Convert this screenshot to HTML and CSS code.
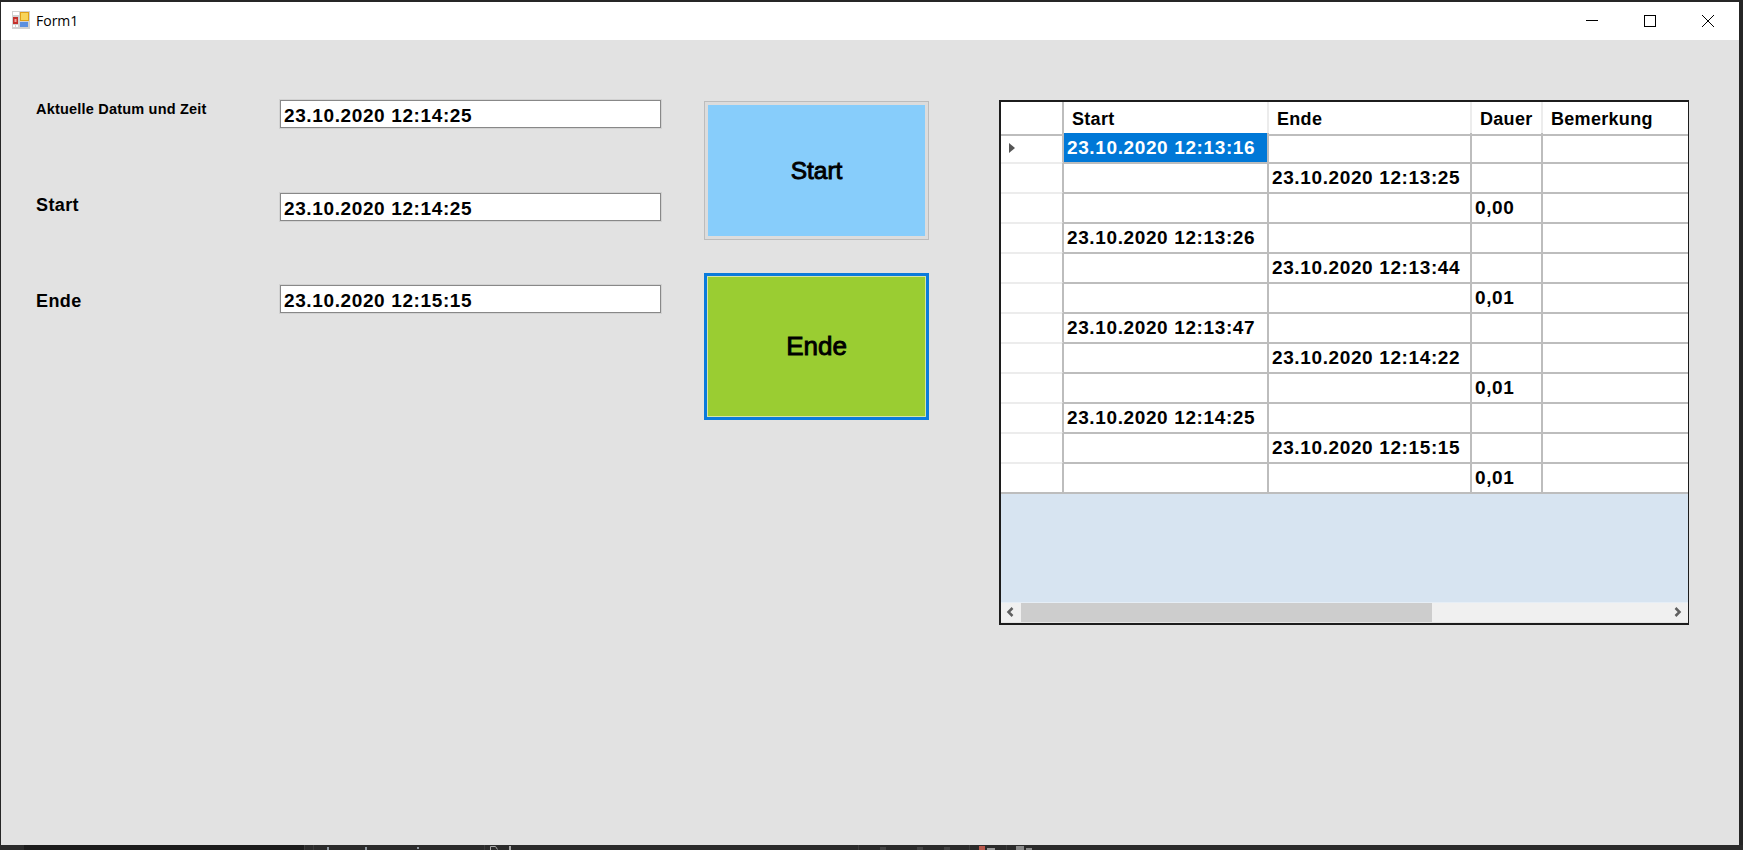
FILE: index.html
```html
<!DOCTYPE html>
<html lang="de">
<head>
<meta charset="utf-8">
<title>Form1</title>
<link rel="stylesheet" href="styles.css">
</head>
<body>
<div class="desk">
<div class="window">
  <header class="titlebar">
    <svg class="app-icon" width="18" height="18" viewBox="0 0 18 18">
      <rect width="18" height="18" fill="#d2d2d2"/>
      <rect x="1" y="1" width="6" height="3" fill="#fff"/>
      <rect x="1" y="6" width="5" height="7" fill="#c4302b"/>
      <rect x="2.5" y="8" width="2" height="3" fill="#f0a8a0"/>
      <rect x="8" y="1" width="9" height="9" fill="#e0a018"/>
      <rect x="9" y="2" width="7" height="7" fill="#f8d458"/>
      <rect x="8" y="11" width="8" height="5" fill="#5b8fe0"/>
      <rect x="1" y="14" width="2" height="2" fill="#fff"/>
      <rect x="4" y="14" width="2" height="2" fill="#fff"/>
    </svg>
    <span class="title">Form1</span>
    <div class="controls">
      <svg class="ctl" width="58" height="38" viewBox="0 0 58 38"><path d="M23 18.5h12" stroke="#000" fill="none"/></svg>
      <svg class="ctl" width="58" height="38" viewBox="0 0 58 38"><rect x="23.5" y="13.5" width="11" height="11" stroke="#000" fill="none"/></svg>
      <svg class="ctl" width="58" height="38" viewBox="0 0 58 38"><path d="M23 13l12 12M35 13L23 25" stroke="#000" fill="none"/></svg>
    </div>
  </header>
  <main class="client">
    <section class="fields">
      <div class="field">
        <label class="lbl lbl-small">Aktuelle Datum und Zeit</label>
        <div class="box">23.10.2020 12:14:25</div>
      </div>
      <div class="field">
        <label class="lbl lbl-start">Start</label>
        <div class="box">23.10.2020 12:14:25</div>
      </div>
      <div class="field">
        <label class="lbl lbl-end">Ende</label>
        <div class="box">23.10.2020 12:15:15</div>
      </div>
    </section>
    <section class="buttons">
      <button class="btn btn-start">Start</button>
      <button class="btn btn-end">Ende</button>
    </section>
    <section class="grid">
      <div class="rows">
        <div class="row head"><div class="c rh"></div><div class="c c1">Start</div><div class="c c2">Ende</div><div class="c c3">Dauer</div><div class="c c4">Bemerkung</div></div>
        <div class="row"><div class="c rh"><span class="arrow"></span></div><div class="c c1 sel">23.10.2020 12:13:16</div><div class="c c2"></div><div class="c c3"></div><div class="c c4"></div></div>
        <div class="row"><div class="c rh"></div><div class="c c1"></div><div class="c c2">23.10.2020 12:13:25</div><div class="c c3"></div><div class="c c4"></div></div>
        <div class="row"><div class="c rh"></div><div class="c c1"></div><div class="c c2"></div><div class="c c3">0,00</div><div class="c c4"></div></div>
        <div class="row"><div class="c rh"></div><div class="c c1">23.10.2020 12:13:26</div><div class="c c2"></div><div class="c c3"></div><div class="c c4"></div></div>
        <div class="row"><div class="c rh"></div><div class="c c1"></div><div class="c c2">23.10.2020 12:13:44</div><div class="c c3"></div><div class="c c4"></div></div>
        <div class="row"><div class="c rh"></div><div class="c c1"></div><div class="c c2"></div><div class="c c3">0,01</div><div class="c c4"></div></div>
        <div class="row"><div class="c rh"></div><div class="c c1">23.10.2020 12:13:47</div><div class="c c2"></div><div class="c c3"></div><div class="c c4"></div></div>
        <div class="row"><div class="c rh"></div><div class="c c1"></div><div class="c c2">23.10.2020 12:14:22</div><div class="c c3"></div><div class="c c4"></div></div>
        <div class="row"><div class="c rh"></div><div class="c c1"></div><div class="c c2"></div><div class="c c3">0,01</div><div class="c c4"></div></div>
        <div class="row"><div class="c rh"></div><div class="c c1">23.10.2020 12:14:25</div><div class="c c2"></div><div class="c c3"></div><div class="c c4"></div></div>
        <div class="row"><div class="c rh"></div><div class="c c1"></div><div class="c c2">23.10.2020 12:15:15</div><div class="c c3"></div><div class="c c4"></div></div>
        <div class="row"><div class="c rh"></div><div class="c c1"></div><div class="c c2"></div><div class="c c3">0,01</div><div class="c c4"></div></div>
      </div>
      <div class="scrollbar">
        <svg class="sb-btn" width="20" height="19" viewBox="0 0 20 19"><path d="M11.5 5L7.5 9l4 4" stroke="#606060" stroke-width="2.5" fill="none"/></svg>
        <div class="thumb"></div>
        <div class="track"></div>
        <svg class="sb-btn" width="20" height="19" viewBox="0 0 20 19"><path d="M7.5 5l4 4-4 4" stroke="#606060" stroke-width="2.5" fill="none"/></svg>
      </div>
    </section>
  </main>
</div>
</div>
<svg class="strip" width="1743" height="5" viewBox="0 0 1743 5">
  <rect width="1743" height="5" fill="#2b2b2b"/>
  <rect x="24" width="280" height="5" fill="#1c1c1c"/>
  <rect x="304" width="1" height="5" fill="#3c3c3c"/>
  <rect x="313" width="1" height="5" fill="#3c3c3c"/>
  <rect x="327" y="2" width="2" height="3" fill="#8f979e"/>
  <rect x="365" y="2" width="2" height="3" fill="#8f979e"/>
  <rect x="417" y="2" width="2" height="2" fill="#8f979e"/>
  <rect x="484" width="1" height="5" fill="#3c3c3c"/>
  <path d="M490.5 5V1.5h5l2 3" stroke="#a8a8a8" fill="none"/>
  <rect x="509" y="1" width="2" height="4" fill="#a8a8a8"/>
  <rect x="858" width="1" height="5" fill="#3c3c3c"/>
  <rect x="880" y="2" width="6" height="3" fill="#444"/>
  <rect x="917" y="2" width="6" height="3" fill="#444"/>
  <rect x="944" y="2" width="6" height="3" fill="#444"/>
  <rect x="969" width="1" height="5" fill="#3c3c3c"/>
  <rect x="979" y="1" width="6" height="4" fill="#b8584c"/>
  <rect x="987" y="3" width="8" height="2" fill="#999"/>
  <rect x="1006" width="1" height="5" fill="#3c3c3c"/>
  <rect x="1016" y="1" width="8" height="4" fill="#8a8a8a"/>
  <rect x="1026" y="3" width="6" height="2" fill="#8a8a8a"/>
</svg>
</body>
</html>
```
FILE: styles.css
```css
* { box-sizing: border-box; }
html, body { margin: 0; }
body { width: 1743px; height: 850px; overflow: hidden; background: #262626; font-family: "Liberation Sans", Arial, sans-serif; color: #000; display: flex; flex-direction: column; }
.desk { padding: 2px 4px 0 1px; flex: none; }
.strip { display: block; flex: none; }
.window { display: flex; flex-direction: column; height: 843px; background: #e2e2e2; }
.titlebar { display: flex; align-items: flex-start; height: 38px; background: #fff; padding: 9px 0 0 11px; flex: none; }
.app-icon { flex: none; }
.title { margin-left: 6px; font: 400 14px/19px "Open Sans", sans-serif; }
.controls { display: flex; margin: -9px 2px 0 auto; }
.ctl { display: block; }
.client { display: flex; flex: 1; padding: 60px 0 0 35px; align-items: flex-start; }
.fields { display: grid; grid-template-rows: 93px 92px 28px; width: 626px; flex: none; }
.field { display: flex; align-items: flex-start; }
.lbl { width: 244px; flex: none; font-weight: 700; font-size: 18px; letter-spacing: .4px; line-height: 20px; }
.lbl-small { font-size: 14.5px; letter-spacing: .2px; margin-top: -1px; }
.lbl-start { margin-top: 2px; }
.lbl-end { margin-top: 6px; }
.box { width: 381px; height: 28px; border: 1px solid #888; box-shadow: 0 0 0 1px rgba(136,136,136,.18); background: #fff; padding: 2px 0 0 3px; font-weight: 700; font-size: 19px; letter-spacing: .62px; line-height: 26px; white-space: nowrap; }
.buttons { display: flex; flex-direction: column; gap: 33px; width: 225px; margin: 1px 0 0 42px; flex: none; }
.btn { display: block; width: 225px; font: 400 24.5px "Liberation Sans", Arial, sans-serif; -webkit-text-stroke: .9px #000; color: #000; padding: 0; cursor: default; }
.btn-start { height: 139px; background: #87cdfb; border: 1px solid #bcbcbc; box-shadow: inset 0 0 0 3px #dcdcdc; }
.btn-end { height: 147px; background: #9acd32; border: 3px solid #0a7bdc; box-shadow: inset 0 0 0 1px #d5e6a8; font-size: 26px; }
.grid { width: 690px; height: 525px; margin-left: 70px; border: 2px solid #1c1c1c; border-right-width: 1px; background: #d7e4f1; display: flex; flex-direction: column; flex: none; }
.rows { flex: 1; font-weight: 700; font-size: 19px; letter-spacing: .62px; }
.row { display: grid; grid-template-columns: 63px 205px 203px 71px 1fr; height: 30px; background: #fff; }
.row.head { height: 31px; font-size: 18px; letter-spacing: .3px; }
.c { border-right: 2px solid #bdbdbd; border-bottom: 2px solid #bdbdbd; padding: 1px 0 0 3px; line-height: 28px; white-space: nowrap; }
.head .c { border-right-color: #ececec; border-bottom-color: #bdbdbd; padding: 2px 0 0 8px; line-height: 30px; }
.c4 { border-right: 0; }
.rh { border-right-color: #bdbdbd; border-bottom-color: #ececec; display: flex; align-items: center; padding: 0 0 0 8px; }
.head .rh { border-right-color: #bdbdbd; }
.row:last-child .rh { border-bottom-color: #bdbdbd; }
.sel { background: #0078d7; color: #fff; }
.arrow { width: 0; height: 0; border-left: 6px solid #555; border-top: 5.5px solid transparent; border-bottom: 5.5px solid transparent; }
.scrollbar { display: flex; height: 21px; background: #f0f0f0; border-top: 1px solid #e6eef6; border-bottom: 1px solid #e4e4e4; flex: none; }
.sb-btn { flex: none; display: block; }
.thumb { width: 411px; background: #cdcdcd; flex: none; }
.track { flex: 1; }
```
